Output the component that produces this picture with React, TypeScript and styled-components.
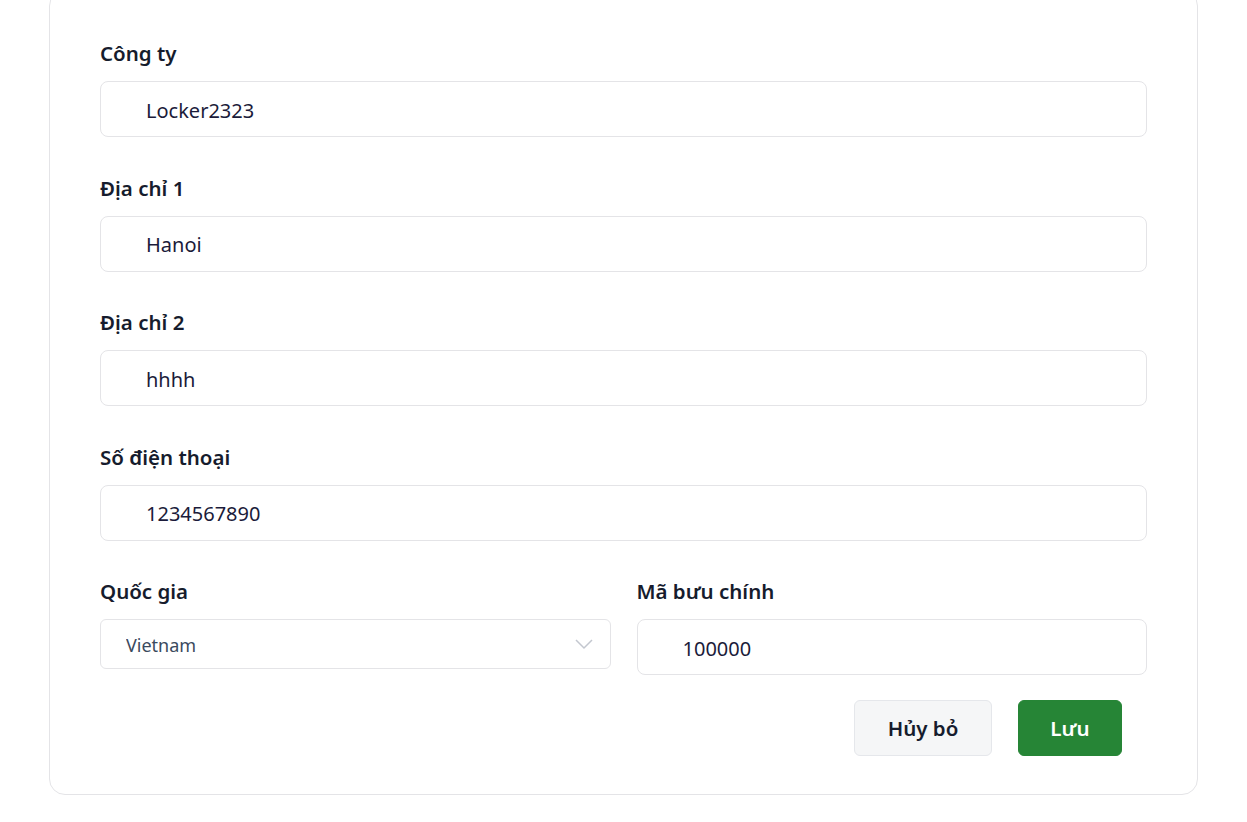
import React, { useState } from 'react'
import styled, { createGlobalStyle } from 'styled-components'

const GlobalStyle = createGlobalStyle`
  html, body {
    margin: 0;
    padding: 0;
    background: #ffffff;
    font-family: "Noto Sans", "Open Sans", sans-serif;
  }
`

const Page = styled.div`
  overflow: hidden;
  padding-bottom: 27px;
`

const Card = styled.form`
  margin: -10px 49px 0;
  padding: 50px 50px 38px;
  border: 1px solid #e4e4e7;
  border-radius: 16px;
  background: #fff;
`

const Field = styled.div`
  margin-bottom: 38.5px;
`

const Label = styled.label`
  display: block;
  font-size: 20.5px;
  line-height: 24px;
  font-weight: 600;
  color: #161c2d;
  margin-bottom: 16px;
`

const TextInput = styled.input`
  box-sizing: border-box;
  display: block;
  width: 100%;
  height: 56px;
  padding: 2px 20px 0 45px;
  border: 1px solid #e4e4e7;
  border-radius: 8px;
  background: #fff;
  font-family: inherit;
  font-size: 20px;
  color: #1b1b3a;
  outline: none;
`

const Row = styled.div`
  display: grid;
  grid-template-columns: 1fr 1fr;
  column-gap: 26px;
  align-items: start;
  margin-bottom: 25px;
`

const Cell = styled.div``

const SelectBox = styled.div`
  position: relative;
  height: 50px;
`

const Select = styled.select`
  box-sizing: border-box;
  width: 100%;
  height: 50px;
  padding: 2px 40px 0 25px;
  border: 1px solid #e4e4e7;
  border-radius: 6px;
  background: #fff;
  appearance: none;
  font-family: inherit;
  font-size: 18px;
  color: #3b4a5e;
  outline: none;
`

const Chevron = styled.svg`
  position: absolute;
  right: 18px;
  top: 19px;
  pointer-events: none;
`

const Actions = styled.div`
  display: flex;
  justify-content: flex-end;
  gap: 26px;
  padding-right: 25px;
`

const Button = styled.button<{ $primary?: boolean }>`
  height: 56px;
  padding: 0 ${p => (p.$primary ? '31.5px' : '32.5px')};
  border-radius: 6px;
  border: 1px solid ${p => (p.$primary ? '#268536' : '#e5e7eb')};
  background: ${p => (p.$primary ? '#268536' : '#f5f6f7')};
  color: ${p => (p.$primary ? '#ffffff' : '#161c2d')};
  font-family: inherit;
  font-size: 20.5px;
  font-weight: 600;
  cursor: pointer;
`

const fields = [
  { key: 'company', label: 'Công ty', value: 'Locker2323' },
  { key: 'address1', label: 'Địa chỉ 1', value: 'Hanoi' },
  { key: 'address2', label: 'Địa chỉ 2', value: 'hhhh' },
  { key: 'phone', label: 'Số điện thoại', value: '1234567890' },
]

export default function App() {
  const [values, setValues] = useState<Record<string, string>>(
    Object.fromEntries(fields.map(f => [f.key, f.value]))
  )
  const [country, setCountry] = useState('Vietnam')
  const [postal, setPostal] = useState('100000')

  return (
    <Page>
      <GlobalStyle />
      <Card onSubmit={e => e.preventDefault()}>
        {fields.map(f => (
          <Field key={f.key}>
            <Label htmlFor={f.key}>{f.label}</Label>
            <TextInput
              id={f.key}
              value={values[f.key]}
              onChange={e => setValues(v => ({ ...v, [f.key]: e.target.value }))}
            />
          </Field>
        ))}
        <Row>
          <Cell>
            <Label htmlFor="country">Quốc gia</Label>
            <SelectBox>
              <Select id="country" value={country} onChange={e => setCountry(e.target.value)}>
                <option>Vietnam</option>
                <option>Thailand</option>
                <option>Japan</option>
              </Select>
              <Chevron width="18" height="12" viewBox="0 0 18 12" fill="none">
                <path d="M1 2l8 8 8-8" stroke="#c3c7cf" strokeWidth="1.5" />
              </Chevron>
            </SelectBox>
          </Cell>
          <Cell>
            <Label htmlFor="postal">Mã bưu chính</Label>
            <TextInput id="postal" value={postal} onChange={e => setPostal(e.target.value)} />
          </Cell>
        </Row>
        <Actions>
          <Button type="button">Hủy bỏ</Button>
          <Button type="submit" $primary>Lưu</Button>
        </Actions>
      </Card>
    </Page>
  )
}
